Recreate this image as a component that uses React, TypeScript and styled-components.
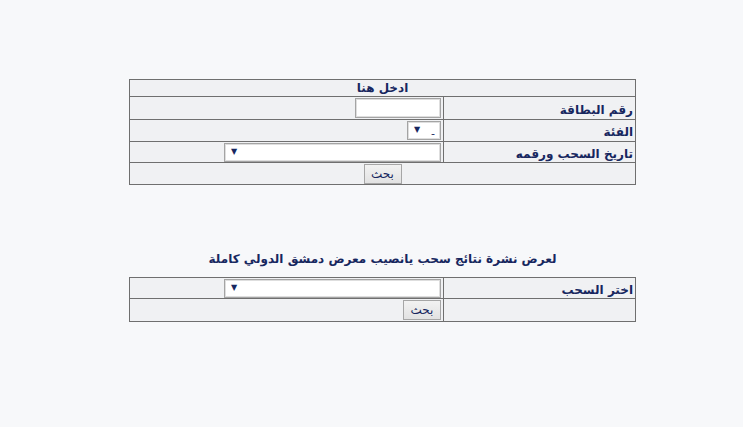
import React from 'react'
import styled, { createGlobalStyle } from 'styled-components'

const GlobalStyle = createGlobalStyle`
    html, body {
        margin: 0;
        padding: 0;
        background: #f7f8fa;
    }
    body {
        font-family: "DejaVu Sans", "Liberation Sans", sans-serif;
        color: #17275f;
    }
`

const Page = styled.div`
    width: 507px;
    margin-left: 129px;
    padding-top: 79px;
    direction: rtl;
`

const Grid = styled.div<{ $rows: string }>`
    display: grid;
    grid-template-columns: 191px 313px;
    grid-template-rows: ${({ $rows }) => $rows};
    gap: 1px;
    padding: 1px;
    background: #6f6f6f;
`

const Cell = styled.div<{ $span?: boolean, $center?: boolean }>`
    background: #f0f1f3;
    display: flex;
    align-items: center;
    justify-content: ${({ $center }) => $center ? 'center' : 'flex-start'};
    grid-column: ${({ $span }) => $span ? '1 / span 2' : 'auto'};
    padding: 0 2px;
    min-width: 0;
`

const Label = styled.span<{ $low?: boolean }>`
    font-size: 12px;
    font-weight: bold;
    white-space: nowrap;
    letter-spacing: -0.2px;
    padding-top: ${({ $low }) => $low ? '3px' : '0'};
`

const TextInput = styled.input`
    box-sizing: border-box;
    width: 86px;
    height: 20px;
    border: 1px solid #a4a4a4;
    box-shadow: inset 0 0 0 1px #dedede;
    background: #fff;
    margin: 0;
    padding: 0 3px;
    outline: none;
`

const SelectWrap = styled.div<{ $w: number }>`
    position: relative;
    box-sizing: border-box;
    width: ${({ $w }) => $w}px;
    height: 19px;
    border: 1px solid #a4a4a4;
    box-shadow: inset 0 0 0 1px #dedede;
    background: #fff;
`

const Select = styled.select`
    appearance: none;
    width: 100%;
    height: 100%;
    border: 0;
    background: transparent;
    font-family: "DejaVu Sans", sans-serif;
    font-size: 11px;
    color: #17275f;
    padding: 0 5px 0 0;
    outline: none;
    direction: rtl;
`

const Arrow = styled.span`
    position: absolute;
    left: 6px;
    top: 3px;
    font-size: 8px;
    line-height: 10px;
    color: #17275f;
    pointer-events: none;
`

const Button = styled.button`
    box-sizing: border-box;
    width: 38px;
    height: 20px;
    margin: 0;
    padding: 0;
    border: 1px solid #a6a6a6;
    background: linear-gradient(#f2f2f2, #e2e2e2);
    font-family: "DejaVu Sans", sans-serif;
    font-size: 12px;
    color: #17275f;
`

const Title = styled.div`
    text-align: center;
    font-size: 12px;
    font-weight: bold;
    line-height: 16px;
    letter-spacing: -0.1px;
    margin: 66px 0 10px;
`

const Dropdown = ({ width, value }: { width: number, value?: string }) => (
    <SelectWrap $w={width}>
        <Select defaultValue={value}>
            {value ? <option>{value}</option> : <option></option>}
        </Select>
        <Arrow>▼</Arrow>
    </SelectWrap>
)

export default function App() {
    return (
        <>
            <GlobalStyle />
            <Page>
                <Grid $rows="16px 22px 21px 20px 21px">
                    <Cell $span $center><Label>ادخل هنا</Label></Cell>
                    <Cell><Label $low>رقم البطاقة</Label></Cell>
                    <Cell><TextInput type="text" /></Cell>
                    <Cell><Label $low>الفئة</Label></Cell>
                    <Cell><Dropdown width={34} value="-" /></Cell>
                    <Cell><Label $low>تاريخ السحب ورقمه</Label></Cell>
                    <Cell><Dropdown width={217} /></Cell>
                    <Cell $span $center><Button>بحث</Button></Cell>
                </Grid>
                <Title>لعرض نشرة نتائج سحب يانصيب معرض دمشق الدولي كاملة</Title>
                <Grid $rows="20px 22px">
                    <Cell><Label $low>اختر السحب</Label></Cell>
                    <Cell><Dropdown width={217} /></Cell>
                    <Cell></Cell>
                    <Cell><Button>بحث</Button></Cell>
                </Grid>
            </Page>
        </>
    )
}
